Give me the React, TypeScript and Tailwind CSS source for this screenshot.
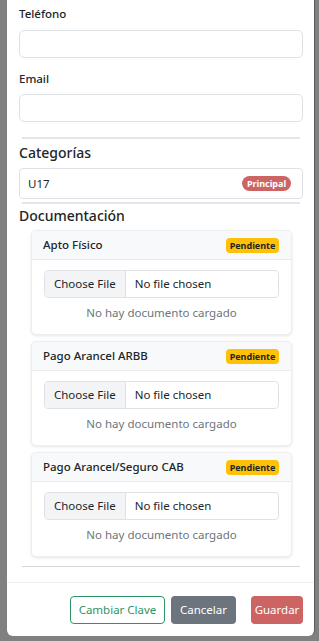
import React from "react";

const Pendiente = () => (
  <span className="inline-flex h-[15px] w-[53px] items-center justify-center rounded-[4px] bg-[#ffc107] text-[9px] font-bold leading-none text-[#212529]">
    Pendiente
  </span>
);

const DocCard = ({ title }: { title: string }) => (
  <div className="overflow-hidden rounded-[5px] border border-[#eceef0] bg-white shadow-[0_1px_3px_rgba(0,0,0,0.1)]">
    <div className="flex h-[29px] items-center justify-between border-b border-[#e9ecef] bg-[#f8f9fa] pl-[11px] pr-[12px]">
      <span className="text-[11.5px] font-medium text-[#212529]">{title}</span>
      <Pendiente />
    </div>
    <div className="px-[12px] pb-[12px] pt-[10px]">
      <div className="flex h-[28px] items-stretch overflow-hidden rounded-[4px] border border-[#dee2e6] text-[11.5px] text-[#212529]">
        <div className="flex items-center border-r border-[#dee2e6] bg-[#f3f4f6] px-[9px]">Choose File</div>
        <div className="flex items-center bg-white px-[9px]">No file chosen</div>
      </div>
      <div className="mt-[6px] text-center text-[11.5px] leading-[18px] text-[#6c757d]">
        No hay documento cargado
      </div>
    </div>
  </div>
);

export default function App() {
  return (
    <div
      className="relative h-[641px] w-[319px] overflow-hidden bg-[#808080]"
      style={{ fontFamily: '"Noto Sans", "Open Sans", sans-serif' }}
    >
      <div className="ml-[7px] flex h-[636px] w-[308px] flex-col rounded-b-[6px] border-r border-[#5a5a5a] bg-white">
        <div className="flex-1 px-[12px] pt-[5px]">
          <div className="text-[11.5px] font-medium leading-[18px] text-[#212529]">Teléfono</div>
          <div className="mt-[7px] h-[28px] w-[284px] rounded-[5px] border border-[#dee2e6] bg-white" />
          <div className="mt-[12px] text-[11.5px] font-medium leading-[18px] text-[#212529]">Email</div>
          <div className="mt-[6px] h-[28px] w-[284px] rounded-[5px] border border-[#dee2e6] bg-white" />
          <div className="mx-[3px] mt-[15px] h-[2px] w-[278px] bg-[#e3e5e8]" />
          <div className="mt-[3px] text-[14px] font-medium leading-[22px] text-[#212529]">Categorías</div>
          <div className="mt-[4px] flex h-[31px] w-[284px] items-center justify-between rounded-[4px] border border-[#dee2e6] pl-[8px] pr-[11px]">
            <span className="text-[11.5px] text-[#212529]">U17</span>
            <span className="inline-flex h-[15px] w-[49px] items-center justify-center rounded-full bg-[#cc6464] text-[9px] font-bold leading-none text-white">
              Principal
            </span>
          </div>
          <div className="mx-[3px] mt-[3px] h-[2px] w-[278px] bg-[#e3e5e8]" />
          <div className="mt-[1px] text-[14px] font-medium leading-[22px] text-[#212529]">Documentación</div>
          <div className="ml-[12px] mt-[3px] flex w-[261px] flex-col gap-[6px]">
            <DocCard title="Apto Físico" />
            <DocCard title="Pago Arancel ARBB" />
            <DocCard title="Pago Arancel/Seguro CAB" />
          </div>
          <div className="mx-[3px] mt-[9px] h-[1px] w-[278px] bg-[#d5d8db]" />
        </div>
        <div className="flex h-[54px] items-center justify-end border-t border-[#eceef0] pr-[11px]">
          <button className="h-[28px] w-[95px] rounded-[4px] border border-[#2e9466] text-[11.5px] text-[#2e9466]">
            Cambiar Clave
          </button>
          <button className="ml-[6px] h-[28px] w-[65px] rounded-[4px] bg-[#6c757d] text-[11.5px] text-white">
            Cancelar
          </button>
          <button className="ml-[15px] h-[28px] w-[52px] rounded-[4px] bg-[#cc6464] text-[11.5px] text-white">
            Guardar
          </button>
        </div>
      </div>
    </div>
  );
}
